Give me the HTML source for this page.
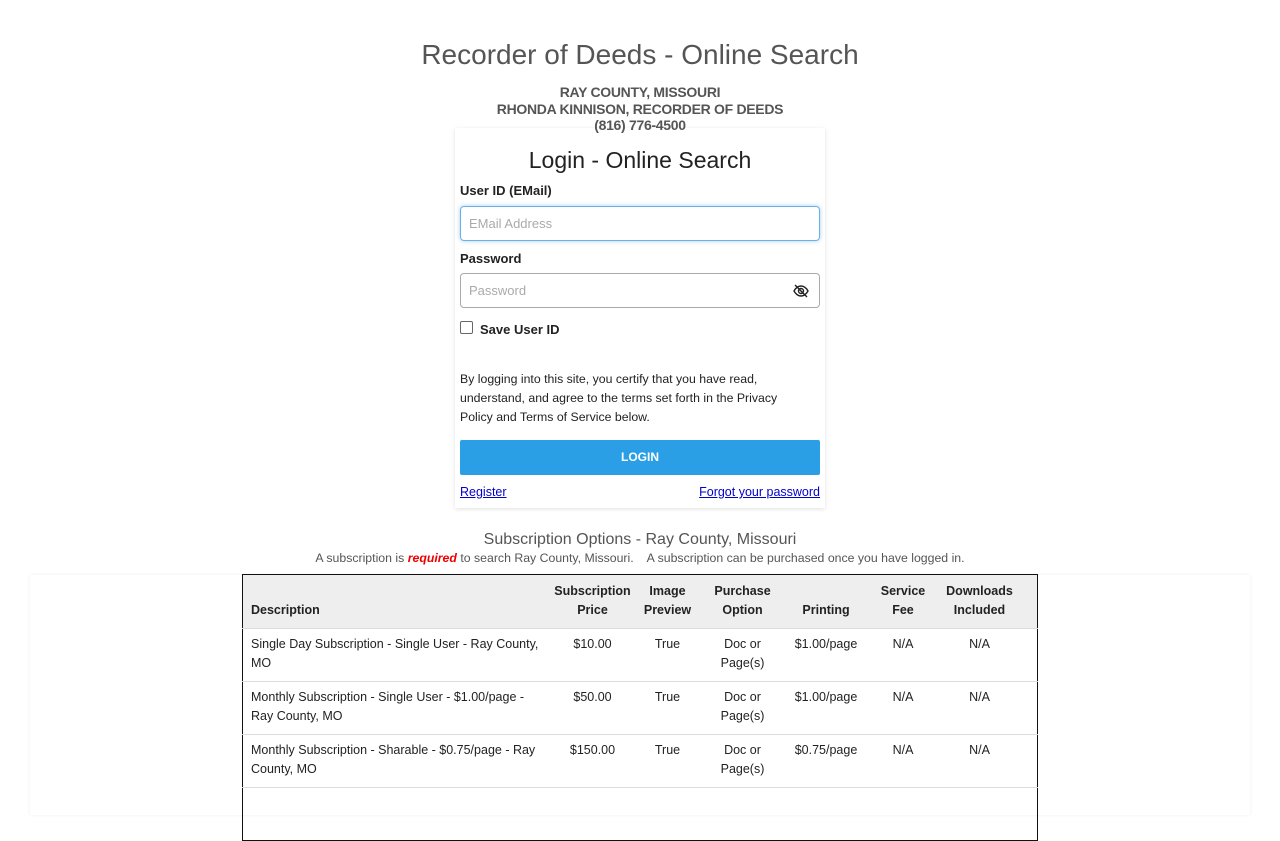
<!DOCTYPE html>
<html><head><meta charset="utf-8"><style>
body{margin:0;background:#fff;font-family:"Liberation Sans",sans-serif;color:#222;width:1280px;height:800px;overflow:hidden;position:relative}
.h1{position:absolute;top:39px;left:0;width:1280px;text-align:center;font-size:28px;color:#555}
.sub{position:absolute;top:84px;left:0;width:1280px;text-align:center;font-size:14px;font-weight:bold;color:#555;line-height:16.5px;letter-spacing:-0.3px;z-index:2}
.card{position:absolute;left:455px;top:128px;width:370px;height:380px;box-shadow:0 1px 4px rgba(0,0,0,.12);background:#fff}
.card .t{position:absolute;top:19px;width:100%;text-align:center;font-size:23px;color:#222}
.lbl{position:absolute;left:5px;font-size:13px;font-weight:bold;color:#222}
.inp{position:absolute;left:5px;width:358px;height:33px;border:1px solid #aaa;border-radius:4px;font-size:13px;color:#aaa;box-sizing:content-box}
.inp span{position:absolute;left:8px;top:9px}
.txt{position:absolute;left:5px;top:242px;width:350px;font-size:12.3px;line-height:19px;color:#222}
.btn{position:absolute;left:5px;top:312px;width:360px;height:35px;background:#2a9fe6;border-radius:2px;color:#fff;font-size:12px;font-weight:bold;text-align:center;line-height:35px}
a{color:#00c;text-decoration:underline;font-size:12.5px;position:absolute;top:357px}
.panel{position:absolute;left:30px;top:575px;width:1220px;height:240px;box-shadow:0 0 3px rgba(0,0,0,.08)}
.st{position:absolute;top:531px;width:1280px;text-align:center;font-size:16px;color:#555}
.sl{position:absolute;top:551px;width:1280px;text-align:center;font-size:12.3px;color:#555}
table{position:absolute;left:242px;top:574px;width:795px;border:1px solid #111;border-collapse:collapse;table-layout:fixed;font-size:12.5px;color:#222}
th{background:#eee;font-weight:bold;text-align:center;vertical-align:bottom;padding:7px 2px 8px;line-height:19px;height:38px;box-sizing:border-box}
td{vertical-align:top;text-align:center;padding:6px 2px 8px;line-height:19px;border-top:1px solid #ddd;height:53px;box-sizing:border-box}
th:first-child,td:first-child{text-align:left;padding-left:8px}
</style></head><body>
<div class="h1">Recorder of Deeds - Online Search</div>
<div class="sub">RAY COUNTY, MISSOURI<br>RHONDA KINNISON, RECORDER OF DEEDS<br>(816) 776-4500</div>
<div class="card">
<div class="t">Login - Online Search</div>
<div class="lbl" style="top:55px">User ID (EMail)</div>
<div class="inp" style="top:78px;border-color:#6ab0e8;box-shadow:0 0 4px rgba(80,160,230,.5)"><span>EMail Address</span></div>
<div class="lbl" style="top:123px">Password</div>
<div class="inp" style="top:145px"><span>Password</span>
<svg style="position:absolute;right:10px;top:9px" width="16" height="16" viewBox="0 0 16 16" fill="none" stroke="#222" stroke-width="1.4"><path d="M1 8c2-3.5 4.5-5 7-5s5 1.5 7 5c-2 3.5-4.5 5-7 5s-5-1.5-7-5z"/><circle cx="8" cy="8" r="2.5"/><path d="M2 2l12 12"/></svg></div>
<div style="position:absolute;left:5px;top:193px;width:11px;height:11px;border:1px solid #666;border-radius:2px"></div>
<div class="lbl" style="top:194px;left:25px">Save User ID</div>
<div class="txt">By logging into this site, you certify that you have read, understand, and agree to the terms set forth in the Privacy Policy and Terms of Service below.</div>
<div class="btn">LOGIN</div>
<a style="left:5px">Register</a><a style="right:5px">Forgot your password</a>
</div>
<div class="st">Subscription Options - Ray County, Missouri</div>
<div class="sl">A subscription is <b style="color:#e00;font-style:italic">required</b> to search Ray County, Missouri. &nbsp;&nbsp; A subscription can be purchased once you have logged in.</div>
<div class="panel"></div>
<table>
<colgroup><col style="width:306px"><col style="width:88px"><col style="width:62px"><col style="width:88px"><col style="width:79px"><col style="width:75px"><col style="width:78px"><col style="width:19px"></colgroup>
<tr style="height:54px"><th>Description</th><th>Subscription Price</th><th>Image Preview</th><th>Purchase Option</th><th>Printing</th><th>Service<br>Fee</th><th>Downloads Included</th><th></th></tr>
<tr><td>Single Day Subscription - Single User - Ray County, MO</td><td>$10.00</td><td>True</td><td>Doc or Page(s)</td><td>$1.00/page</td><td>N/A</td><td>N/A</td><td></td></tr>
<tr><td>Monthly Subscription - Single User - $1.00/page - Ray County, MO</td><td>$50.00</td><td>True</td><td>Doc or Page(s)</td><td>$1.00/page</td><td>N/A</td><td>N/A</td><td></td></tr>
<tr><td>Monthly Subscription - Sharable - $0.75/page - Ray County, MO</td><td>$150.00</td><td>True</td><td>Doc or Page(s)</td><td>$0.75/page</td><td>N/A</td><td>N/A</td><td></td></tr>
<tr><td>&nbsp;</td><td></td><td></td><td></td><td></td><td></td><td></td><td></td></tr>
</table>
</body></html>
